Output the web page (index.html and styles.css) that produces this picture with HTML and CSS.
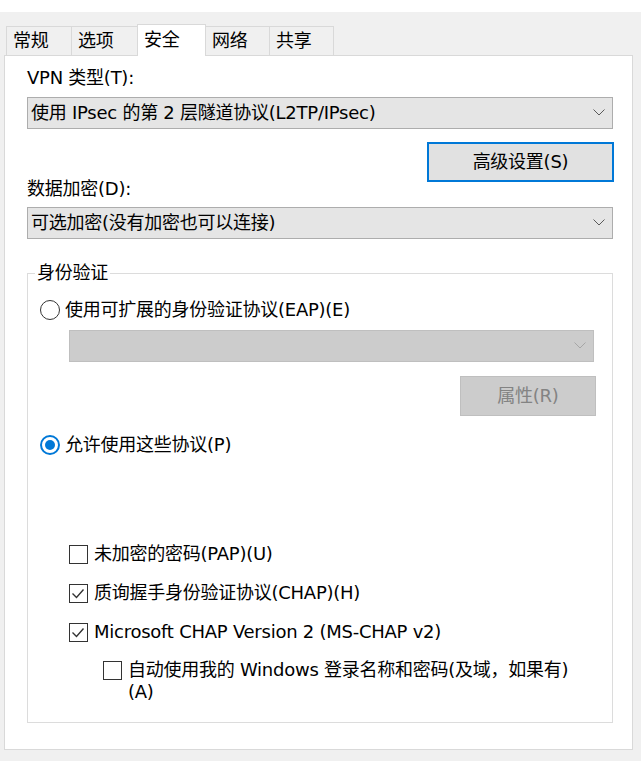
FILE: index.html
```html
<!DOCTYPE html>
<html lang="zh-CN">
<head>
<meta charset="utf-8">
<title>VPN 属性 - 安全</title>
<link rel="stylesheet" href="styles.css">
</head>
<body>
<div class="titlebar"></div>
<div class="tabs">
  <div class="tab t1">常规</div>
  <div class="tab t2">选项</div>
  <div class="tab t3 active">安全</div>
  <div class="tab t4">网络</div>
  <div class="tab t5">共享</div>
</div>
<div class="panel">
  <div class="label">VPN 类型(T):</div>
  <div class="select">
    <span class="select-text">使用 IPsec 的第 2 层隧道协议(L2TP/IPsec)</span>
    <svg class="chev" width="12" height="7" viewBox="0 0 12 7"><polyline points="0.5,0.5 6,6 11.5,0.5" fill="none" stroke="#5a5a5a" stroke-width="1"/></svg>
  </div>
  <div class="btn-row">
    <button class="btn btn-default">高级设置(S)</button>
  </div>
  <div class="label label-enc">数据加密(D):</div>
  <div class="select">
    <span class="select-text">可选加密(没有加密也可以连接)</span>
    <svg class="chev" width="12" height="7" viewBox="0 0 12 7"><polyline points="0.5,0.5 6,6 11.5,0.5" fill="none" stroke="#5a5a5a" stroke-width="1"/></svg>
  </div>

  <fieldset class="group">
    <legend class="group-title">身份验证</legend>
    <div class="group-body">
      <div class="radio-row">
        <span class="radio"></span>
        <span class="radio-text">使用可扩展的身份验证协议(EAP)(E)</span>
      </div>
      <div class="select select-disabled">
        <span class="select-text"></span>
        <svg class="chev" width="12" height="7" viewBox="0 0 12 7"><polyline points="0.5,0.5 6,6 11.5,0.5" fill="none" stroke="#a6a6a6" stroke-width="1"/></svg>
      </div>
      <div class="btn-row btn-row-props">
        <button class="btn btn-disabled">属性(R)</button>
      </div>
      <div class="radio-row radio-row-2">
        <span class="radio radio-checked"></span>
        <span class="radio-text">允许使用这些协议(P)</span>
      </div>

      <div class="checks">
        <div class="check-row">
          <span class="checkbox"></span>
          <span class="check-text">未加密的密码(PAP)(U)</span>
        </div>
        <div class="check-row">
          <span class="checkbox"><svg width="19" height="19" viewBox="0 0 19 19"><polyline points="3.5,9.5 7.5,13.5 14.5,5.5" fill="none" stroke="#333" stroke-width="1.4"/></svg></span>
          <span class="check-text">质询握手身份验证协议(CHAP)(H)</span>
        </div>
        <div class="check-row">
          <span class="checkbox"><svg width="19" height="19" viewBox="0 0 19 19"><polyline points="3.5,9.5 7.5,13.5 14.5,5.5" fill="none" stroke="#333" stroke-width="1.4"/></svg></span>
          <span class="check-text">Microsoft CHAP Version 2 (MS-CHAP v2)</span>
        </div>
        <div class="check-row check-row-sub">
          <span class="checkbox"></span>
          <span class="check-text check-text-wrap">自动使用我的 Windows 登录名称和密码(及域，如果有)<br>(A)</span>
        </div>
      </div>
    </div>
  </fieldset>
</div>
</body>
</html>
```

FILE: styles.css
```css
* {
  box-sizing: border-box;
}

html, body {
  margin: 0;
  padding: 0;
}

body {
  background: #f0f0f0;
  font-family: "DejaVu Sans", "Noto Sans CJK SC", sans-serif;
  font-size: 18px;
  letter-spacing: -0.25px;
  color: #000;
  width: 641px;
  height: 761px;
  overflow: hidden;
}

.titlebar {
  height: 12px;
  background: #ffffff;
}

.tabs {
  display: flex;
  align-items: flex-end;
  height: 29px;
  margin-top: 14px;
  padding-left: 6px;
  position: relative;
  z-index: 1;
}

.tab {
  height: 29px;
  border: 1px solid #d9d9d9;
  border-bottom: none;
  margin-left: -1px;
  padding-left: 6px;
  line-height: 27px;
  background: #f0f0f0;
  white-space: nowrap;
}

.tab:first-child {
  margin-left: 0;
}

.t1 { width: 66px; }
.t2 { width: 67px; }
.t3 { width: 69px; }
.t4 { width: 65px; }
.t5 { width: 65px; }

.tab.active {
  height: 32px;
  margin-bottom: -1px;
  background: #ffffff;
  line-height: 30px;
  position: relative;
  z-index: 2;
}

.panel {
  margin-left: 4px;
  width: 629px;
  background: #ffffff;
  border: 1px solid #d9d9d9;
  padding: 10px 19px 26px 22px;
}

.label {
  line-height: 24px;
  height: 24px;
}

.label-enc {
  margin-top: -5px;
}

.select {
  height: 32px;
  margin-top: 7px;
  background: #e5e5e5;
  border: 1px solid #adadad;
  display: flex;
  align-items: center;
  justify-content: space-between;
  padding: 0 7px 0 3px;
}

.label-enc + .select {
  margin-top: 6px;
}

.select-text {
  line-height: 24px;
  white-space: nowrap;
}

.chev {
  display: block;
  margin-top: -1px;
}

.select-disabled {
  background: #cccccc;
  border-color: #bfbfbf;
  margin-top: 8px;
  margin-left: 29px;
  margin-right: 2px;
}

.btn-row {
  display: flex;
  justify-content: flex-end;
  margin-top: 13px;
  margin-right: -1px;
}

.btn {
  font: inherit;
  letter-spacing: inherit;
  color: #000;
  height: 40px;
  width: 187px;
  background: #e1e1e1;
  border: 1px solid #adadad;
  padding: 0;
  line-height: 24px;
  border-radius: 0;
}

.btn-default {
  border: 2px solid #0078d7;
}

.btn-row-props {
  margin-top: 14px;
  margin-right: 0;
}

.btn-disabled {
  width: 136px;
  background: #cccccc;
  border-color: #bfbfbf;
  color: #838383;
}

.group {
  margin: 22px 0 0 0;
  padding: 13px 16px 19px 0;
  border: 1px solid #dcdcdc;
  min-width: 0;
}

.group-title {
  margin-left: 7px;
  padding: 0 2px;
  line-height: 24px;
}

.group-body {
  padding-left: 12px;
}

.radio-row {
  display: flex;
  align-items: center;
  height: 24px;
  line-height: 24px;
}

.radio-row-2 {
  margin-top: 17px;
}

.radio {
  width: 20px;
  height: 20px;
  border-radius: 50%;
  border: 1px solid #333333;
  margin-right: 5px;
  flex: none;
  display: flex;
  align-items: center;
  justify-content: center;
}

.radio-checked {
  border: 2px solid #0078d7;
}

.radio-checked::after {
  content: "";
  width: 10px;
  height: 10px;
  border-radius: 50%;
  background: #0078d7;
}

.radio-text {
  white-space: nowrap;
}

.checks {
  display: flex;
  flex-direction: column;
  gap: 15px;
  margin-top: 85px;
  padding-left: 29px;
}

.check-row {
  display: flex;
  align-items: flex-start;
  line-height: 24px;
}

.checkbox {
  width: 19px;
  height: 19px;
  border: 1px solid #333333;
  margin-top: 3px;
  margin-right: 6px;
  flex: none;
  display: flex;
  align-items: center;
  justify-content: center;
}

.checkbox svg {
  display: block;
  flex: none;
}

.check-text {
  white-space: nowrap;
}

.check-row-sub {
  padding-left: 34px;
}

.check-text-wrap {
  line-height: 22px;
}

.check-row-sub .checkbox {
  margin-top: 2px;
}
```
